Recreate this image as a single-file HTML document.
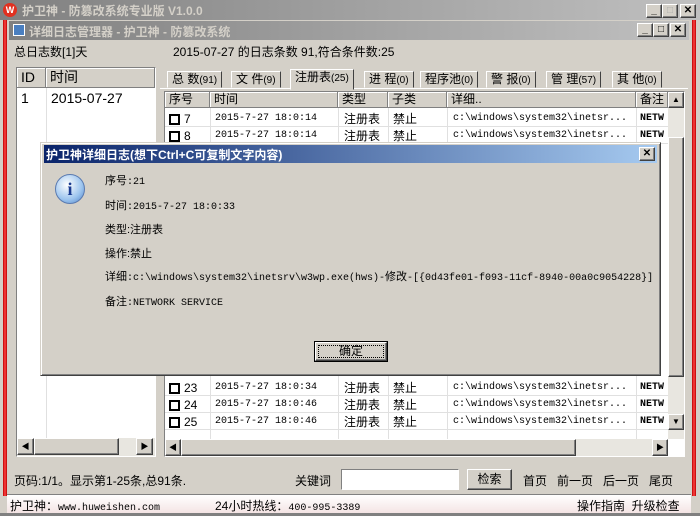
<!DOCTYPE html><html><head><meta charset="utf-8"><style>
*{box-sizing:border-box;margin:0;padding:0}
body{width:700px;height:516px;overflow:hidden;background:#d4d0c8;font-family:"Liberation Sans","Noto Sans CJK SC",sans-serif;font-size:12px;color:#000;position:relative}
.a{position:absolute}
.mono{font-family:"Liberation Mono","Noto Sans CJK SC",monospace;font-size:10px}
.btn{background:#d4d0c8;border:1px solid;border-color:#fff #404040 #404040 #fff;box-shadow:inset -1px -1px #808080}
.tb{width:16px;height:14px;font-size:10px;text-align:center;line-height:12px;font-weight:bold}
.sunk{border:1px solid;border-color:#808080 #fff #fff #808080;background:#fff}
.hd{background:#d4d0c8;border-right:1px solid #808080;border-bottom:1px solid #808080;box-shadow:inset 1px 1px #fff;height:16px;line-height:15px;padding-left:4px;position:absolute}
.row{position:absolute;left:0;height:17px;line-height:16px;width:520px;border-bottom:1px solid #e0e0e0}
.row span{position:absolute;top:1px}
.cb{display:inline-block;width:11px;height:11px;border:2px solid #000;position:absolute;left:4px;top:4px}
.vl{position:absolute;top:16px;bottom:16px;width:1px;background:#e0e0e0}
.tab{position:absolute;top:71px;height:17px;border:1px solid;border-color:#fff #404040 transparent #fff;line-height:15px;padding:0 4px;font-size:12px}
</style></head><body>
<div class="a" style="left:0;top:0;width:700px;height:20px;background:linear-gradient(90deg,#808080,#c0c0c0)"></div>
<div class="a" style="left:3px;top:3px;width:14px;height:14px;border-radius:7px;background:#e03020;color:#fff;font-size:9px;text-align:center;line-height:14px;font-weight:bold">W</div>
<div class="a" style="left:22px;top:2px;color:#d4d0c8;font-weight:bold;font-size:12px">护卫神 - 防篡改系统专业版 V1.0.0</div>
<div class="a btn tb" style="left:646px;top:4px">_</div><div class="a btn tb" style="left:662px;top:4px;color:#aaa">□</div><div class="a btn tb" style="left:680px;top:4px">✕</div>
<div class="a" style="left:3px;top:20px;width:4px;height:476px;background:linear-gradient(90deg,#b00,#f44,#b00)"></div>
<div class="a" style="left:692px;top:20px;width:4px;height:476px;background:linear-gradient(90deg,#b00,#f44,#b00)"></div>
<div class="a" style="left:9px;top:21px;width:680px;height:19px;background:linear-gradient(90deg,#808080,#c0c0c0)"></div>
<div class="a" style="left:13px;top:24px;width:12px;height:12px;background:#4a7fc0;border:1px solid #fff"></div>
<div class="a" style="left:29px;top:23px;color:#d4d0c8;font-weight:bold">详细日志管理器 - 护卫神 - 防篡改系统</div>
<div class="a btn tb" style="left:637px;top:23px">_</div><div class="a btn tb" style="left:653px;top:23px">□</div><div class="a btn tb" style="left:670px;top:23px">✕</div>
<div class="a" style="left:14px;top:43px">总日志数[1]天</div>
<div class="a" style="left:173px;top:43px">2015-07-27 的日志条数 91,符合条件数:25</div>
<div class="a sunk" style="left:16px;top:67px;width:140px;height:390px;overflow:hidden">
 <div class="hd" style="left:0;top:0;width:29px;height:20px;font-size:14px;line-height:19px">ID</div>
 <div class="hd" style="left:29px;top:0;width:109px;height:20px;font-size:14px;line-height:19px">时间</div>
 <div class="a" style="left:4px;top:22px;font-size:14px">1</div><div class="a" style="left:34px;top:22px;font-size:14px">2015-07-27</div>
 <div class="a" style="left:29px;top:20px;width:1px;height:350px;background:#e0e0e0"></div>
 <div class="a" style="left:0;top:370px;width:138px;height:18px;background:#e8e6e0"><div class="btn a" style="left:0;top:0;width:17px;height:17px;font-size:8px;text-align:center;line-height:15px">◀</div><div class="btn a" style="left:17px;top:0;width:85px;height:17px"></div><div class="btn a" style="left:119px;top:0;width:17px;height:17px;font-size:8px;text-align:center;line-height:15px">▶</div></div>
</div>
<div class="tab" style="left:167px">总 数<small>(91)</small></div>
<div class="tab" style="left:231px">文 件<small>(9)</small></div>
<div class="tab" style="left:290px;top:69px;height:21px;background:#d4d0c8;z-index:2">注册表<small>(25)</small></div>
<div class="tab" style="left:364px">进 程<small>(0)</small></div>
<div class="tab" style="left:420px">程序池<small>(0)</small></div>
<div class="tab" style="left:486px">警 报<small>(0)</small></div>
<div class="tab" style="left:546px">管 理<small>(57)</small></div>
<div class="tab" style="left:612px">其 他<small>(0)</small></div>
<div class="a" style="left:160px;top:88px;width:528px;height:1px;background:#fff"></div>
<div class="a sunk" style="left:164px;top:91px;width:521px;height:366px;overflow:hidden">
 <div class="hd" style="left:0;top:0;width:45px">序号</div><div class="hd" style="left:45px;top:0;width:128px">时间</div><div class="hd" style="left:173px;top:0;width:50px">类型</div><div class="hd" style="left:223px;top:0;width:59px">子类</div><div class="hd" style="left:282px;top:0;width:189px">详细..</div><div class="hd" style="left:471px;top:0;width:32px">备注</div>
 <div class="vl" style="left:45px"></div><div class="vl" style="left:173px"></div><div class="vl" style="left:223px"></div><div class="vl" style="left:282px"></div><div class="vl" style="left:471px"></div>
 <div class="row" style="top:18px"><i class="cb"></i><span style="left:19px">7</span><span class="mono" style="left:50px">2015-7-27 18:0:14</span><span style="left:179px">注册表</span><span style="left:228px">禁止</span><span class="mono" style="left:288px">c:\windows\system32\inetsr...</span><span class="mono" style="left:475px;font-weight:bold">NETW</span></div>
 <div class="row" style="top:35px"><i class="cb"></i><span style="left:19px">8</span><span class="mono" style="left:50px">2015-7-27 18:0:14</span><span style="left:179px">注册表</span><span style="left:228px">禁止</span><span class="mono" style="left:288px">c:\windows\system32\inetsr...</span><span class="mono" style="left:475px;font-weight:bold">NETW</span></div>
 <div class="row" style="top:287px"><i class="cb"></i><span style="left:19px">23</span><span class="mono" style="left:50px">2015-7-27 18:0:34</span><span style="left:179px">注册表</span><span style="left:228px">禁止</span><span class="mono" style="left:288px">c:\windows\system32\inetsr...</span><span class="mono" style="left:475px;font-weight:bold">NETW</span></div>
 <div class="row" style="top:304px"><i class="cb"></i><span style="left:19px">24</span><span class="mono" style="left:50px">2015-7-27 18:0:46</span><span style="left:179px">注册表</span><span style="left:228px">禁止</span><span class="mono" style="left:288px">c:\windows\system32\inetsr...</span><span class="mono" style="left:475px;font-weight:bold">NETW</span></div>
 <div class="row" style="top:321px"><i class="cb"></i><span style="left:19px">25</span><span class="mono" style="left:50px">2015-7-27 18:0:46</span><span style="left:179px">注册表</span><span style="left:228px">禁止</span><span class="mono" style="left:288px">c:\windows\system32\inetsr...</span><span class="mono" style="left:475px;font-weight:bold">NETW</span></div>
 <div class="a" style="left:503px;top:0;width:16px;height:347px;background:#e8e6e0"><div class="btn a" style="left:0;top:0;width:16px;height:16px;font-size:8px;text-align:center;line-height:14px">▲</div><div class="btn a" style="left:0;top:45px;width:16px;height:240px"></div><div class="btn a" style="left:0;top:322px;width:16px;height:16px;font-size:8px;text-align:center;line-height:14px">▼</div></div>
 <div class="a" style="left:0;top:347px;width:503px;height:17px;background:#e8e6e0"><div class="btn a" style="left:0;top:0;width:16px;height:17px;font-size:8px;text-align:center;line-height:15px">◀</div><div class="btn a" style="left:16px;top:0;width:395px;height:17px"></div><div class="btn a" style="left:487px;top:0;width:16px;height:17px;font-size:8px;text-align:center;line-height:15px">▶</div></div>
</div>
<div class="a" style="left:40px;top:142px;width:621px;height:234px;background:#d4d0c8;border:1px solid;border-color:#d4d0c8 #404040 #404040 #d4d0c8;box-shadow:inset 1px 1px #fff,inset -1px -1px #808080">
 <div class="a" style="left:3px;top:2px;width:613px;height:18px;background:linear-gradient(90deg,#0a246a,#a6caf0)"></div>
 <div class="a" style="left:5px;top:3px;color:#fff;font-weight:bold;font-size:12px">护卫神详细日志(想下Ctrl+C可复制文字内容)</div>
 <div class="a btn tb" style="left:598px;top:4px">✕</div>
 <div class="a" style="left:14px;top:31px;width:30px;height:30px;border-radius:15px;background:radial-gradient(circle at 40% 35%,#fff,#9cc4ee 60%,#4a80c8);border:1px solid #5a7ab0;color:#1a3a90;font:bold 18px 'Liberation Serif',serif;text-align:center;line-height:28px">i</div>
 <div class="a" style="left:64px;top:27px;line-height:23.6px;font-size:11px">序号<span class="mono">:21</span><br>时间<span class="mono">:2015-7-27 18:0:33</span><br>类型:注册表<br>操作:禁止<br>详细<span class="mono">:c:\windows\system32\inetsrv\w3wp.exe(hws)-</span>修改<span class="mono">-[{0d43fe01-f093-11cf-8940-00a0c9054228}]</span><br>备注<span class="mono">:NETWORK SERVICE</span></div>
 <div class="a" style="left:273px;top:198px;width:74px;height:21px;border:1px solid #000;"><div class="btn" style="width:72px;height:19px;text-align:center;line-height:16px;outline:1px dotted #000;outline-offset:-4px">确定</div></div>
</div>
<div class="a" style="left:14px;top:472px">页码:1/1。显示第1-25条,总91条.</div>
<div class="a" style="left:295px;top:472px">关键词</div>
<div class="a sunk" style="left:341px;top:469px;width:118px;height:21px"></div>
<div class="a btn" style="left:467px;top:469px;width:45px;height:21px;text-align:center;line-height:18px">检索</div>
<div class="a" style="left:523px;top:472px">首页 &nbsp; 前一页 &nbsp; 后一页 &nbsp; 尾页</div>
<div class="a" style="left:7px;top:494px;width:684px;height:1px;background:#808080"></div>
<div class="a" style="left:7px;top:495px;width:684px;height:18px;background:linear-gradient(180deg,#fff,#f4e4e4)"></div>
<div class="a" style="left:10px;top:497px">护卫神：<span class="mono">www.huweishen.com</span></div>
<div class="a" style="left:215px;top:497px">24小时热线：<span class="mono">400-995-3389</span></div>
<div class="a" style="left:577px;top:497px">操作指南 &nbsp;升级检查</div>
<div class="a" style="left:0;top:513px;width:700px;height:3px;background:#808080"></div>
</body></html>
